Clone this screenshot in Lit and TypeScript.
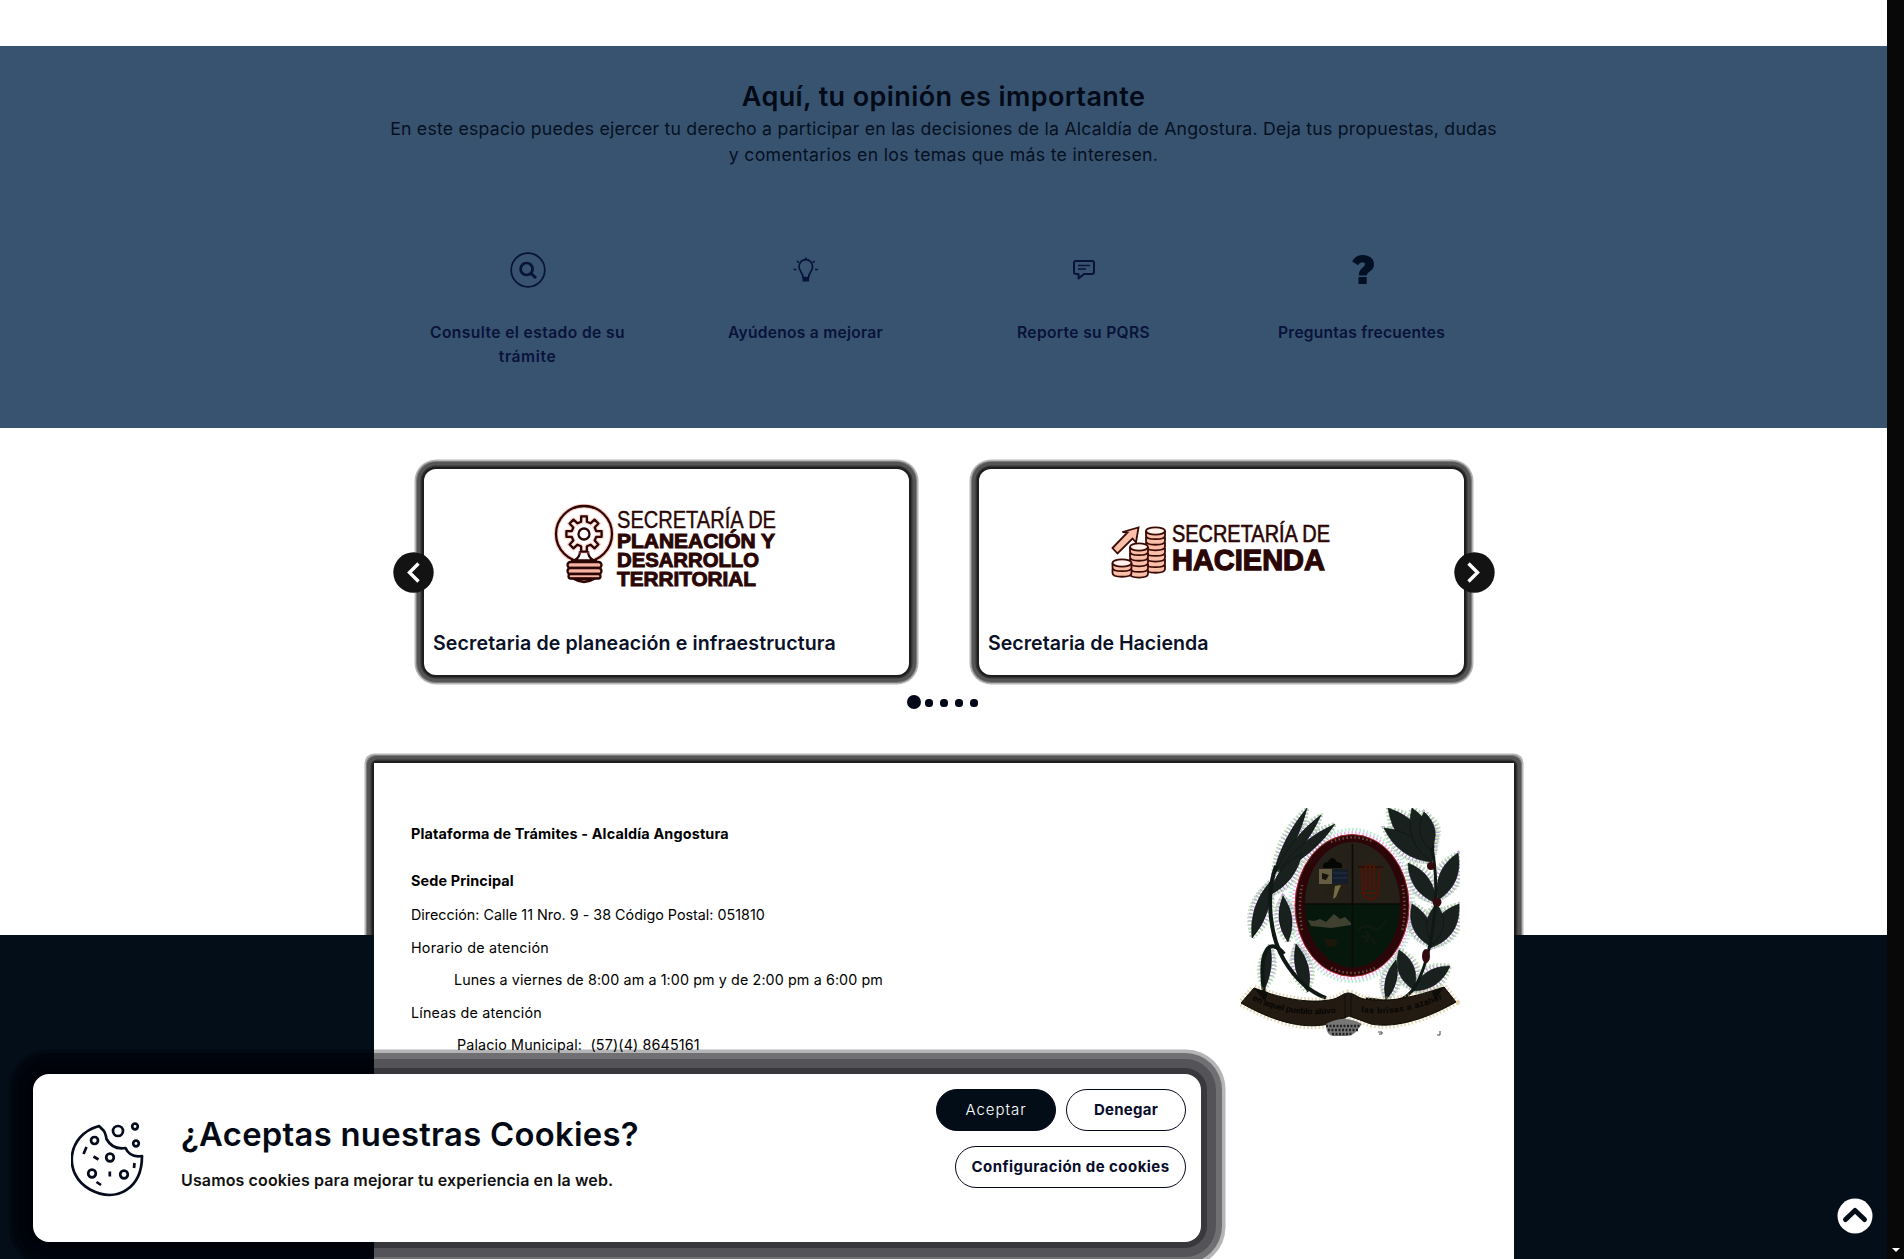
import { LitElement, html, svg, css } from "lit";
import { customElement } from "lit/decorators.js";
import { styleMap } from "lit/directives/style-map.js";

// Lens-shaped leaf running from one tip to the other.
const leaf = (x1: number, y1: number, x2: number, y2: number, w: number) => {
  const dx = x2 - x1, dy = y2 - y1, l = Math.hypot(dx, dy);
  const nx = (-dy / l) * w, ny = (dx / l) * w;
  const mx = (x1 + x2) / 2, my = (y1 + y2) / 2;
  return svg`<path d="M${x1} ${y1}Q${mx + nx} ${my + ny} ${x2} ${y2}Q${mx - nx} ${my - ny} ${x1} ${y1}Z"/>`;
};

const LEAVES: number[][] = [
  [1273, 875, 1307, 808, 9], [1275, 873, 1321, 815, 10], [1278, 872, 1335, 824, 11], [1270, 895, 1302, 853, 13],
  [1270, 882, 1252, 938, 13], [1283, 896, 1288, 942, 13], [1296, 944, 1308, 992, 13], [1270, 945, 1264, 990, 8],
  [1432, 860, 1388, 808, 21], [1432, 862, 1384, 828, 17], [1432, 862, 1412, 808, 20], [1431, 850, 1424, 812, 15],
  [1436, 903, 1408, 863, 16], [1438, 900, 1458, 853, 17], [1430, 946, 1412, 904, 17], [1430, 948, 1459, 904, 20], [1433, 944, 1437, 904, 17],
  [1414, 990, 1399, 950, 16], [1412, 991, 1450, 966, 15], [1386, 1000, 1396, 960, 11],
];

// Toothed wheel outline centred on (cx, cy).
const gear = (cx: number, cy: number, inner: number, outer: number, teeth: number) => {
  const step = (Math.PI * 2) / teeth;
  const pts: string[] = [];
  for (let i = 0; i < teeth; i++) {
    const a = i * step - Math.PI / 2;
    for (const [r, o] of [[inner, -0.3], [outer, -0.2], [outer, 0.2], [inner, 0.3]]) {
      pts.push(`${(cx + r * Math.cos(a + o * step)).toFixed(1)} ${(cy + r * Math.sin(a + o * step)).toFixed(1)}`);
    }
  }
  return `M${pts.join("L")}Z`;
};

const coins = (x: number, y: number, w: number, n: number) => svg`
  ${Array.from({ length: n }, (_, i) => n - 1 - i).map((i) => svg`
    <path d="M${x} ${y + 4 + i * 5.6}v4.4c0 5 ${w} 5 ${w} 0v-4.4" fill="#f9bfa9"/>`)}
  <ellipse cx=${x + w / 2} cy=${y + 4} rx=${w / 2} ry="3.6" fill="#fff1ea"/>`;

@customElement("app-root")
export class AppRoot extends LitElement {
  static styles = css`
    :host { display: block; }
    * { box-sizing: border-box; }
    .page { position: relative; display: flex; width: 1904px; height: 1259px; overflow: hidden; background: #fff; font-family: Inter, "Open Sans", sans-serif; color: #05080f; }
    .main { display: flex; flex-direction: column; width: 1887px; padding-top: 46px; }
    .bar { display: flex; flex-direction: column; justify-content: flex-end; align-items: center; width: 17px; background: #080808; padding-bottom: 7px; }
    .bar i { border: 4px solid transparent; border-top-color: #fff; border-bottom: 0; }
    .t { display: inline-block; white-space: pre; }
    .opinion { height: 382px; padding-top: 35px; background: #385370; display: flex; flex-direction: column; align-items: center; }
    .title { font-size: 27px; line-height: 32px; font-weight: 600; color: #020a17; }
    .lead { margin-top: 3px; font-size: 17.7px; line-height: 26px; color: #05101f; display: flex; flex-direction: column; align-items: center; }
    .links { margin-top: 82px; display: grid; grid-template-columns: repeat(4, 278px); padding-left: 2px; }
    .link { display: flex; flex-direction: column; align-items: center; color: #08123a; }
    .link svg { width: 40px; height: 40px; margin-bottom: 31px; }
    .link .t { font-size: 15.6px; line-height: 24px; font-weight: 600; }
    .carousel { position: relative; display: flex; gap: 70px; padding: 41px 0 0 424px; }
    .card { width: 485px; height: 206px; border-radius: 12px; background: #fff; box-shadow: 0 0 0 2px #1d1d1d, 0 0 0 3.5px #333, 0 0 0 7px #555, 0 0 0 8px #7d7d7d, 0 0 0 9.5px #b6b6b6; }
    .card svg { display: block; width: 485px; height: 161px; }
    .card .t { margin-left: 9px; font-size: 19.6px; line-height: 26px; font-weight: 600; color: #0a1128; }
    .arrow { position: absolute; top: 124px; width: 41px; height: 41px; }
    .prev { left: 393px; } .next { left: 1454px; }
    .dots { display: flex; align-items: center; gap: 7px; height: 14px; margin: 20px 0 0 907px; }
    .dots i { width: 8px; height: 8px; border-radius: 3.5px; background: #020817; margin-top: 2px; }
    .dots i.on { width: 14px; height: 14px; border-radius: 7px; margin: 0 -3px 0 0; }
    .foot { flex: 1; padding: 54px 0 0 374px; background: linear-gradient(#fff 226px, #030e19 226px); position: relative; z-index: 0; }
    .panel { position: relative; display: flex; width: 1140px; height: 496px; background: #fff; padding: 45px 0 0 37px; }
    .panel::before { content: ""; position: absolute; z-index: -1; inset: 0 0 auto 0; height: 172px; border-radius: 3px 3px 0 0; clip-path: inset(-12px -12px 0 -12px); box-shadow: 0 0 0 2px #1d1d1d, 0 0 0 3.5px #333, 0 0 0 7px #555, 0 0 0 8px #7d7d7d, 0 0 0 9.5px #b6b6b6; }
    .info { width: 829px; font-size: 14.3px; line-height: 32.5px; color: #000; display: flex; flex-direction: column; align-items: flex-start; padding-top: 10px; }
    .heavy { font-weight: 700; font-size: 14.4px; }
    .sede { margin-top: 14px; } .dir { margin-top: 2px; } .in1 { margin-left: 43px; } .in2 { margin-left: 46px; }
    .emblem { width: 220px; height: 232px; }
    .cookie { position: absolute; left: 33px; top: 1074px; width: 1168px; height: 168px; border-radius: 16px; background: #fff; display: flex; padding: 15px 15px 0 38px; box-shadow: 0 0 0 6px rgba(0,0,6,.33), 0 0 0 15px rgba(0,0,6,.25), 0 0 0 21px rgba(0,0,6,.38), 0 0 0 24.5px rgba(0,0,6,.29); }
    .cookie svg { width: 74px; height: 76px; margin-top: 32px; }
    .ask { margin: 25px 0 0 36px; flex: 1; display: flex; flex-direction: column; align-items: flex-start; }
    .ask .h { font-size: 32.8px; line-height: 40px; font-weight: 600; color: #030a15; }
    .ask .p { font-size: 16px; line-height: 24px; font-weight: 600; margin-top: 14px; color: #111; }
    .btns { display: flex; flex-wrap: wrap; justify-content: flex-end; align-content: flex-start; gap: 15px 10px; width: 260px; }
    .btn { height: 42px; width: 120px; border: 1.5px solid #05091c; border-radius: 21px; display: flex; align-items: center; justify-content: center; font-size: 15px; font-weight: 700; color: #080d2b; padding-bottom: 1px; }
    .btn.ok { background: #030d18; color: #fff; font-weight: 300; }
    .btn.cfg { width: 231px; }
    .up { position: absolute; left: 1837px; top: 1198px; width: 36px; height: 36px; }
  `;

  // One line of text with its tracking in pixels.
  t(s: string, track: number, c = "") {
    return html`<span class="t ${c}" style=${styleMap({ letterSpacing: `${track}px` })}>${s}</span>`;
  }

  render() {
    return html`<div class="page">
      <div class="main">
        <section class="opinion">
          ${this.t("Aquí, tu opinión es importante", 0.4, "title")}
          <div class="lead">
            ${this.t("En este espacio puedes ejercer tu derecho a participar en las decisiones de la Alcaldía de Angostura. Deja tus propuestas, dudas", 0.22)}
            ${this.t("y comentarios en los temas que más te interesen.", 0.32)}
          </div>
          <div class="links">
            <div class="link">
              <svg viewBox="508 250 40 40" fill="none" stroke="currentColor"><circle cx="528" cy="270" r="16.8" stroke-width="1.7"/><circle cx="526.6" cy="269" r="6" stroke-width="2.7"/><path d="M531 273.500l5 4.500" stroke-width="3"/></svg>
              ${this.t("Consulte el estado de su", 0.41)}${this.t("trámite", 0.6)}
            </div>
            <div class="link">
              <svg viewBox="786 250 40 40" fill="none" stroke="currentColor" stroke-width="1.7"><path d="M803 277.500c0-5-4-6-4-11a6.800 6.800 0 0 1 13.600 0c0 5-4 6-4 11z"/><path d="M802.500 277h6.500v4.500h-6.500z" fill="currentColor" stroke="none"/><path d="M805.800 257.500v2.200M797 261l1.600 1.600M814.600 261l-1.600 1.600M793.500 269.500h3M815 269.500h3"/></svg>
              ${this.t("Ayúdenos a mejorar", 0.25)}
            </div>
            <div class="link">
              <svg viewBox="1064 250 40 40" fill="none" stroke="currentColor" stroke-width="2" stroke-linejoin="round"><path d="M1076 261h16q2 0 2 2v9q0 2-2 2h-8l-5.500 4.500v-4.500h-2.500q-2 0-2-2v-9q0-2 2-2z"/><path d="M1078 265.500h12M1078 269h8" stroke-width="1.400"/></svg>
              ${this.t("Reporte su PQRS", 0.34)}
            </div>
            <div class="link">
              <svg viewBox="1342 250 40 40"><path d="M1352.200 261.500C1354.500 257 1358 255 1363 255c6 0 11 3.500 11 9 0 7.500-7.200 7.500-7.200 11.500h-8c0-7.500 6.200-8 6.200-11.200 0-3-5-3-7 .900z" fill="#031024"/><path d="M1358.500 277h8.200v7h-8.200z" fill="#031024"/></svg>
              ${this.t("Preguntas frecuentes", 0.21)}
            </div>
          </div>
        </section>

        <section class="carousel">
          <div class="card">
            <svg viewBox="424 469 485 161" fill="none" stroke="#2a0604" stroke-width="2.300">
              <circle cx="584" cy="534" r="28" stroke="#ff8d77" stroke-width="4.500" opacity=".45"/>
              <circle cx="584" cy="534" r="28"/>
              <path d="M580 551q0 6-5 9M588 551q0 6 5 9M571 560.500h26"/>
              <path d=${gear(584, 534, 12.5, 17.8, 8)} fill="#fff" stroke="#ff8d77" stroke-width="4.500" stroke-opacity=".35"/>
              <path d=${gear(584, 534, 12.5, 17.8, 8)} stroke-linejoin="round"/><circle cx="584" cy="534" r="5.500"/>
              <g fill="#f9b3a3"><rect x="567.500" y="562" width="34" height="6" rx="3"/><rect x="567.500" y="568" width="34" height="6" rx="3"/><rect x="568.500" y="574" width="32" height="4.500" rx="2.200"/><path d="M574 579q10 6 20 0z"/></g>
              <g font-family="Liberation Sans" fill="#2a0604" stroke="#2a0604">
                <text x="617" y="527.500" font-size="24" stroke-width=".4" textLength="159" lengthAdjust="spacingAndGlyphs">SECRETARÍA DE</text>
                <g font-weight="700" font-size="21" stroke-width="1"><text x="617" y="548" textLength="158" lengthAdjust="spacingAndGlyphs">PLANEACIÓN Y</text>
                <text x="617" y="566.800" textLength="142" lengthAdjust="spacingAndGlyphs">DESARROLLO</text>
                <text x="617" y="585.500" textLength="139" lengthAdjust="spacingAndGlyphs">TERRITORIAL</text></g>
              </g>
            </svg>
            ${this.t("Secretaria de planeación e infraestructura", 0.11)}
          </div>
          <div class="card">
            <svg viewBox="979 469 485 161" fill="none" stroke="#3a0a05" stroke-width="1.800">
              ${coins(1146, 527, 19, 7)}${coins(1130, 543, 18, 5)}${coins(1112.5, 559, 19, 2)}
              <path d="M1112.500 548l15-15.500-5-.500 16-4.500-2.500 15-3.500-4-15 15z" fill="#f9bfa9"/>
              <g font-family="Liberation Sans" fill="#2a0604" stroke="#2a0604">
                <text x="1172" y="541.500" font-size="24" stroke-width=".6" textLength="158" lengthAdjust="spacingAndGlyphs">SECRETARÍA DE</text>
                <text x="1172" y="569.500" font-size="30" stroke-width="1.300" font-weight="700" textLength="153" lengthAdjust="spacingAndGlyphs">HACIENDA</text>
              </g>
            </svg>
            ${this.t("Secretaria de Hacienda", 0)}
          </div>
          <svg class="arrow prev" viewBox="0 0 41 41"><circle cx="20.500" cy="20.500" r="20.200" fill="#131313"/><path d="M25.500 11.500l-9 9 9 9" fill="none" stroke="#fff" stroke-width="3.400"/></svg>
          <svg class="arrow next" viewBox="0 0 41 41"><circle cx="20.500" cy="20.500" r="20.200" fill="#131313"/><path d="M14.500 11.500l9 9-9 9" fill="none" stroke="#fff" stroke-width="3.400"/></svg>
        </section>
        <div class="dots"><i class="on"></i><i></i><i></i><i></i><i></i></div>

        <footer class="foot">
          <div class="panel">
            <div class="info">
              ${this.t("Plataforma de Trámites - Alcaldía Angostura", 0.165, "heavy")}
              ${this.t("Sede Principal", 0.13, "heavy sede")}
              ${this.t("Dirección: Calle 11 Nro. 9 - 38 Código Postal: 051810", 0.02, "dir")}
              ${this.t("Horario de atención", 0.24)}
              ${this.t("Lunes a viernes de 8:00 am a 1:00 pm y de 2:00 pm a 6:00 pm", 0.11, "in1")}
              ${this.t("Líneas de atención", 0.21)}
              ${this.t("Palacio Municipal:  (57)(4) 8645161", 0.155, "in2")}
            </div>
            <svg class="emblem" viewBox="1240 808 220 232">
              <g fill="none" stroke-width="3" stroke-dasharray="1.500 2.200" opacity=".8">
                <ellipse cx="1352" cy="905.500" rx="59" ry="73" stroke="#e99be0"/><ellipse cx="1352" cy="905.500" rx="62" ry="76" stroke="#9fe8c8"/>
                <g stroke="#a58fc8" stroke-width="4">${LEAVES.map(([a, b, c, d, w]) => leaf(a, b, c, d, w + 5))}</g>
                <g stroke="#a8d8a0" stroke-dashoffset="2">${LEAVES.map(([a, b, c, d, w]) => leaf(a, b, c, d, w + 9))}</g>
              </g>
              <g fill="#18211d" stroke="#0b1110" stroke-width=".6">${LEAVES.map(([a, b, c, d, w]) => leaf(a, b, c, d, w))}</g>
              <g fill="none" stroke="#101816" stroke-width="4"><path d="M1276 866C1264 900 1272 940 1284 960S1310 992 1326 998"/><path d="M1264 992C1258 950 1270 936 1284 954"/><path d="M1432 848C1442 900 1430 960 1416 985S1380 999 1366 999" stroke-width="3"/></g>
              <g fill="#310b0d"><circle cx="1431" cy="866" r="4"/><circle cx="1437" cy="902" r="4.500"/><ellipse cx="1426" cy="956" rx="4" ry="7"/></g>
              <ellipse cx="1352" cy="905.500" rx="57" ry="71" fill="#2b0507" stroke="#a3262c" stroke-width="1"/>
              <ellipse cx="1352.500" cy="905.500" rx="47.500" ry="62" fill="#06180c"/>
              <path d="M1305 904a47.500 62 0 0 1 95 0z" fill="#252018"/>
              <path d="M1305 904h95M1352.500 844v123" stroke="#0a0a08" stroke-width="1.500"/>
              <path d="M1323 868q-1-6 5-6 4-8 9 0 6 0 5 6z" fill="#050705"/>
              <path d="M1319 869h13v15h-13z" fill="#655d41"/><path d="M1332 869h16v15h-16z" fill="#151d2b"/><path d="M1333 873h14M1333 878h14" stroke="#22324c"/><path d="M1322 873l7 2-3 5-4-1z" fill="#15130c"/>
              <path d="M1323 884h20l-3 9-6 6-7-6z" fill="#242014"/><path d="M1335 886l6-1-5 12-3 2z" fill="#766b44"/>
              <path d="M1358 867h25" stroke="#2c0f06" stroke-width="2"/>
              <path d="M1361 868c5 12-4 30 9 31s6-20 11-31M1366 865v25M1370 863v27M1374 865v25M1364 893h12" fill="none" stroke="#501407" stroke-width="2.200"/>
              <path d="M1308 920l6 1 6-2 6 3 8-8 6 5 5-2 6 6v2l-20 3-20-2z" fill="#3f4030"/>
              <path d="M1358 930q8-7 14-2t14-7M1361 936l10 2 4 6M1366 931q6 8-2 11" stroke="#101a12" stroke-width="2.500" fill="none"/>
              <path d="M1324 938l14 2-3 7-8-1z" fill="#1c160b"/>
              <g fill="none" stroke="#6d4a3e" stroke-width="2.500" stroke-dasharray="1.500 2.500"><path d="M1331 842q21-9 43 0" /><path d="M1302 930q-4-22 0-45"/><path d="M1402.500 930q4-22 0-45"/><path d="M1331 968q21 10 44 0"/></g>
              <path d="M1254 988c30 12 60 16 80 11 6-2 10-6 14-6 6 0 10 5 16 6 26 4 50-2 80-12l12 15c-35 20-65 26-85 22l-22-8-20 8c-28 6-58-4-88-21z" fill="none" stroke="#c8b06a" stroke-width="7" stroke-dasharray="1.500 2.200" opacity=".5"/>
              <path d="M1254 988c30 12 60 16 80 11 6-2 10-6 14-6 6 0 10 5 16 6 26 4 50-2 80-12l12 15c-35 20-65 26-85 22l-22-8-20 8c-28 6-58-4-88-21z" fill="#231b12" stroke="#0d0a07"/>
              <path d="M1254 988l14 4-3 10zM1444 987l-12 5 3 8z" fill="#0c0c08"/><path d="M1345 995v24M1351 995v22" stroke="#110d08"/>
              <path id="mottoLeft" d="M1252 1000Q1295 1020 1341 1012" fill="none"/><path id="mottoRight" d="M1361 1012Q1402 1018 1446 997" fill="none"/>
              <g font-family="Liberation Sans" font-weight="700" font-size="8.500" fill="#050403"><text><textPath href="#mottoLeft" textLength="86">en aquel pueblo altivo</textPath></text><text><textPath href="#mottoRight" textLength="84">las brisas a azahar</textPath></text></g>
              <path d="M1326 1024q18-10 36 0l-4 5q-4 7-12 7h-12q-8 0-8-12z" fill="#777"/><path d="M1326 1026h34M1328 1030h30M1332 1034h20" stroke="#222" stroke-width="2.500" stroke-dasharray="2 1.500"/>
              <path d="M1378 1032h4v2h-3M1437 1035h3v-4" stroke="#444" fill="none"/>
            </svg>
          </div>
        </footer>
      </div>
      <div class="bar"><i></i></div>

      <div class="cookie">
        <svg viewBox="71 1122 74 76" fill="none" stroke="#060b1d" stroke-width="2.700" stroke-linejoin="round">
          <path d="M99 1127C66 1136 63 1176 90 1190.500S142 1189 142 1157q-12 2-16.500-8-13 2-19-9-1-6-3-8.500z"/>
          <circle cx="118" cy="1132" r="5"/><circle cx="135" cy="1127.500" r="2.800"/><circle cx="136" cy="1144.500" r="2.800"/><circle cx="94.500" cy="1141.500" r="3.500"/><circle cx="110" cy="1158.500" r="3.800"/><circle cx="92" cy="1174.500" r="3.800"/><circle cx="124" cy="1175.500" r="3.800"/>
          <path d="M86.500 1148l-3 7M93.500 1157.500l5 3M109.800 1172.500v5M96.500 1183l4.500 3M134.500 1164l-.500 5"/>
        </svg>
        <div class="ask">
          ${this.t("¿Aceptas nuestras Cookies?", 0.28, "h")}
          ${this.t("Usamos cookies para mejorar tu experiencia en la web.", 0.125, "p")}
        </div>
        <div class="btns">
          <div class="btn ok">${this.t("Aceptar", 0.95)}</div><div class="btn">${this.t("Denegar", 0.24)}</div>
          <div class="btn cfg">${this.t("Configuración de cookies", 0.44)}</div>
        </div>
      </div>
      <svg class="up" viewBox="0 0 36 36"><circle cx="18" cy="18" r="17.500" fill="#fff"/><path d="M8.500 21.500L18 12.500l9.500 9" fill="none" stroke="#030d18" stroke-width="5" stroke-linecap="round" stroke-linejoin="round"/></svg>
    </div>`;
  }
}
